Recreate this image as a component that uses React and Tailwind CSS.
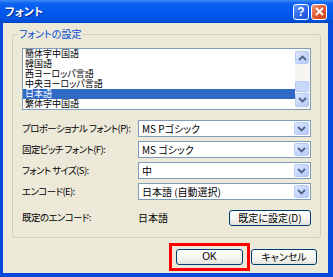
import { useState } from 'react';

const items = ['簡体字中国語', '韓国語', '西ヨーロッパ言語', '中央ヨーロッパ言語', '日本語', '繁体字中国語'];

const rows = [
  { label: 'プロポーショナル フォント(P):', value: 'MS Pゴシック' },
  { label: '固定ピッチ フォント(F):', value: 'MS ゴシック' },
  { label: 'フォント サイズ(S):', value: '中' },
  { label: 'エンコード(E):', value: '日本語 (自動選択)' },
];

function Chevron({ up }) {
  return (
    <svg width="9" height="6" viewBox="0 0 9 6">
      <path
        d={up ? 'M1 5 L4.5 1.5 L8 5' : 'M1 1 L4.5 4.5 L8 1'}
        fill="none"
        stroke="#4D6185"
        strokeWidth="1.8"
      />
    </svg>
  );
}

function ArrowBox({ up, className = '' }) {
  return (
    <div className={`flex items-center justify-center rounded-[2px] border border-[#B7CBF5] bg-[linear-gradient(135deg,#DCE6FD_0%,#C3D4FC_60%,#B4C8F8_100%)] ${className}`}>
      <Chevron up={up} />
    </div>
  );
}

function Combo({ value }) {
  return (
    <div className="flex h-[17px] w-[173px] shrink-0 items-center border border-[#7F9DB9] bg-white">
      <span className="flex-1 whitespace-nowrap pl-[3px] leading-[15px]">{value}</span>
      <ArrowBox className="m-[1px] h-[13px] w-[15px]" />
    </div>
  );
}

function XpButton({ children, className = '' }) {
  return (
    <button className={`flex h-[16px] shrink-0 items-center justify-center whitespace-nowrap rounded-[3px] border border-[#003C74] bg-[linear-gradient(180deg,#FFFFFF_0%,#F4F4F0_60%,#E3E2DA_100%)] leading-[14px] ${className}`}>
      {children}
    </button>
  );
}

export default function App() {
  const [selected, setSelected] = useState(4);

  return (
    <div className="flex h-[277px] w-[333px] flex-col bg-[#0848DC] text-[10px] text-black [font-family:'Noto_Sans_CJK_JP','Liberation_Sans',sans-serif] [font-feature-settings:'palt']">
      {/* タイトルバー */}
      <div className="flex h-[23px] shrink-0 items-center bg-[linear-gradient(180deg,#3E8EF6_0%,#0E63F1_14%,#0058EE_50%,#0354E3_82%,#0046C6_100%)] pl-[5px] pr-[6px]">
        <span className="flex-1 text-[11px] font-bold text-white [text-shadow:1px_1px_0_#0A2A8A]">フォント</span>
        <div className="flex gap-[2px]">
          <div className="flex h-[16px] w-[16px] items-center justify-center rounded-[3px] border border-white bg-[linear-gradient(135deg,#6B9BFA_0%,#2F69EC_50%,#1B4FD8_100%)] text-[12px] font-bold leading-none text-white [font-family:'Liberation_Sans',sans-serif]">?</div>
          <div className="flex h-[16px] w-[16px] items-center justify-center rounded-[3px] border border-white bg-[linear-gradient(135deg,#F09A7C_0%,#E05A33_50%,#C9421C_100%)]">
            <svg width="9" height="9" viewBox="0 0 9 9">
              <path d="M1 1 L8 8 M8 1 L1 8" stroke="#fff" strokeWidth="1.8" />
            </svg>
          </div>
        </div>
      </div>

      {/* 本体 */}
      <div className="mb-[4px] ml-[3px] mr-[5px] flex flex-1 flex-col bg-[#ECE9D8] px-[9px] pt-[5px]">
        <fieldset className="rounded-[3px] border border-[#D0D0BF] px-[9px] pb-[12px]">
          <legend className="ml-[-4px] px-[1px] leading-[12px] text-[#0046D5]">フォントの設定</legend>

          {/* リストボックス */}
          <div className="mt-[8px] flex h-[62px] border border-[#7F9DB9] bg-white">
            <div className="flex-1">
              {items.map((item, i) => (
                <div
                  key={item}
                  onClick={() => setSelected(i)}
                  className={`h-[10px] pl-[2px] text-[9px] leading-[10px] ${i === selected ? 'bg-[#316AC5] text-white' : ''}`}
                >
                  {item}
                </div>
              ))}
            </div>
            <div className="flex w-[15px] flex-col bg-[#F6F5F0] py-[2px] pr-[1px]">
              <ArrowBox up className="h-[13px]" />
              <div className="flex-1" />
              <div className="h-[11px] rounded-[2px] border border-[#B7CBF5] bg-[#C8D7FC]" />
              <ArrowBox className="mt-[1px] h-[14px]" />
            </div>
          </div>

          {/* 設定行 */}
          <div className="mt-[10px] flex flex-col gap-[4px]">
            {rows.map((row) => (
              <div key={row.label} className="flex items-center">
                <span className="w-[116px] whitespace-nowrap text-[9.5px] tracking-[-0.6px]">{row.label}</span>
                <Combo value={row.value} />
              </div>
            ))}
          </div>

          <div className="mt-[10px] flex h-[15px] items-center">
            <span className="w-[116px] whitespace-nowrap text-[9.5px] tracking-[-0.6px]">既定のエンコード:</span>
            <span className="flex-1">日本語</span>
            <XpButton className="h-[15px] w-[82px]">既定に設定(D)</XpButton>
          </div>
        </fieldset>

        {/* 下部ボタン */}
        <div className="mt-[5px] flex items-center justify-end gap-[1px] pr-[2px]">
          <div className="border-[3px] border-[#FF0000] px-[4px] py-[3px]">
            <XpButton className="w-[67px] [font-family:'Liberation_Sans',sans-serif]">OK</XpButton>
          </div>
          <XpButton className="w-[66px]">キャンセル</XpButton>
        </div>
      </div>
    </div>
  );
}
